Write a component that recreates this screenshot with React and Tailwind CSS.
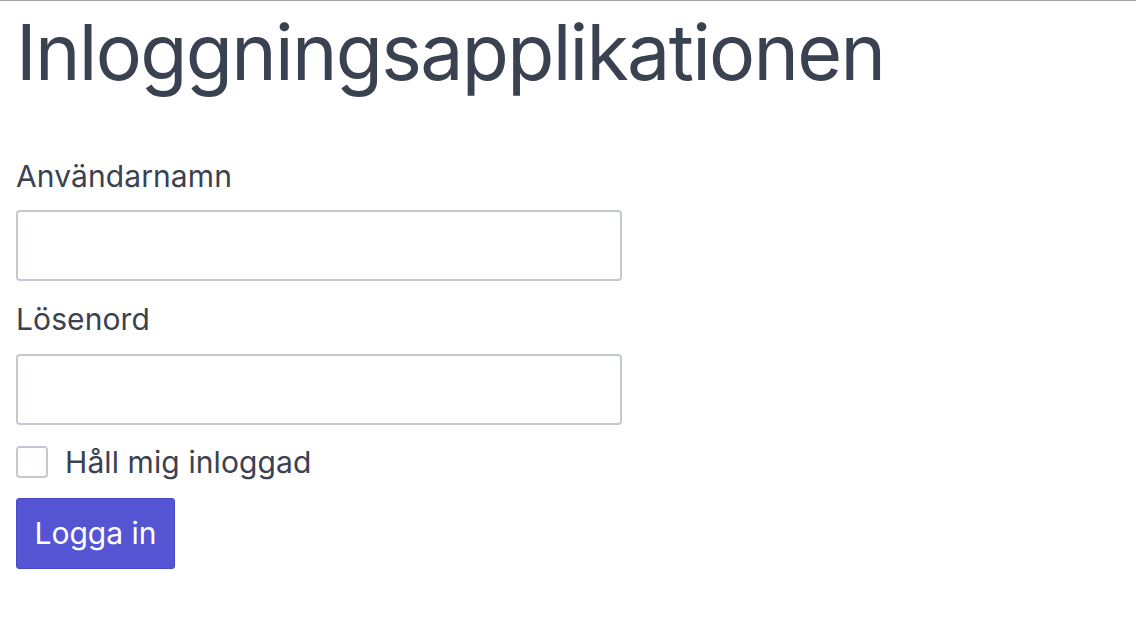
export default function App() {
  return (
    <div className="min-h-[644px] border-t border-[#a3a3a3] bg-white px-4 font-['Inter',sans-serif] text-[#3a4150]">
      <h1 className="pt-[6px] text-[77px] leading-[90px] font-normal tracking-[-1.7px]">Inloggningsapplikationen</h1>
      <form className="mt-[59px] flex w-[606px] flex-col" onSubmit={e => e.preventDefault()}>
        <label className="text-[30px] leading-[40px] tracking-[0.1px]">Användarnamn</label>
        <input type="text" className="mt-[14px] h-[71px] rounded-[4px] border-2 border-[#c3c7cf] px-3 text-[30px] outline-none" />
        <label className="mt-[18px] text-[30px] leading-[40px] tracking-[0.1px]">Lösenord</label>
        <input type="password" className="mt-[15px] h-[71px] rounded-[4px] border-2 border-[#c3c7cf] px-3 text-[30px] outline-none" />
        <label className="mt-[17px] flex h-[40px] items-center gap-[17px] text-[30px] leading-[40px] tracking-[0.1px]">
          <span className="h-[32px] w-[32px] shrink-0 rounded-[4px] border-2 border-[#c3c7cf] bg-white" />
          Håll mig inloggad
        </label>
        <button type="submit" className="mt-[16px] h-[71px] w-[159px] rounded-[3px] border border-[#4a4ac8] bg-[#5555d4] text-[30px] text-white">
          Logga in
        </button>
      </form>
    </div>
  )
}
